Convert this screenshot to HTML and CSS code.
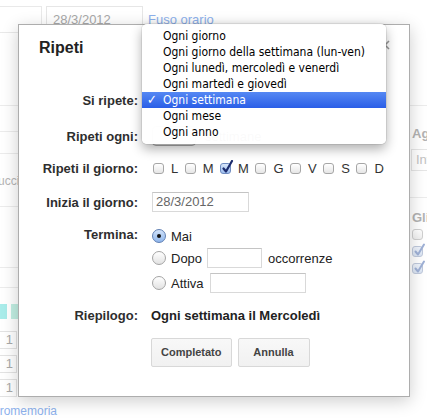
FILE: index.html
```html
<!DOCTYPE html>
<html lang="it">
<head>
<meta charset="utf-8">
<title>Ripeti</title>
<link rel="stylesheet" href="styles.css">
</head>
<body>
<div class="page">
  <div class="toprow">
    <div class="tbox"></div>
    <div class="tinput">28/3/2012</div>
    <span class="tlink">Fuso orario</span>
  </div>
  <div class="cols">
    <div class="leftcol">
      <div class="lrow l1"></div>
      <div class="lrow l2"></div>
      <div class="lrow l3"></div>
      <div class="lrow l4"><span class="ucci">ucci</span></div>
      <div class="lrow l5"></div>
      <div class="lrow l6"></div>
      <div class="bars"><span class="bar b1"></span><span class="bar b2"></span></div>
      <div class="numbox first">1</div>
      <div class="numbox">1</div>
      <div class="numrow"><div class="numbox">1</div><div class="ghostbtn"></div></div>
      <div class="promem">promemoria</div>
    </div>
    <div class="rightcol">
      <div class="rrow r1"></div>
      <div class="rhead ag">Aggiungi</div>
      <div class="rinput">Invita</div>
      <div class="rrow r2"></div>
      <div class="rhead gli">Gli invitati</div>
      <div class="rcb"></div>
      <div class="rcb on"><svg viewBox="0 0 14 14" width="14" height="14"><path d="M3.5 8.5 L6 11.5 L12 1.5" fill="none" stroke="#9fb1d6" stroke-width="2" stroke-linecap="round" stroke-linejoin="round"/></svg></div>
      <div class="rcb on"><svg viewBox="0 0 14 14" width="14" height="14"><path d="M3.5 8.5 L6 11.5 L12 1.5" fill="none" stroke="#9fb1d6" stroke-width="2" stroke-linecap="round" stroke-linejoin="round"/></svg></div>
    </div>
  </div>
</div>

<div class="dialog">
  <div class="title">Ripeti</div>
  <span class="close"><svg viewBox="0 0 10 10" width="10" height="10"><path d="M1 1 L9 9 M9 1 L1 9" stroke="#999" stroke-width="1.6" fill="none"/></svg></span>

  <div class="row r-ripete">
    <div class="label">Si ripete:</div>
    <div class="sel wide"></div>
  </div>
  <div class="row r-ogni">
    <div class="label">Ripeti ogni:</div>
    <div class="sel small"></div>
    <span class="unit">settimane</span>
  </div>
  <div class="row r-giorno">
    <div class="label">Ripeti il giorno:</div>
    <div class="days">
      <span class="cb"></span><span class="day">L</span>
      <span class="cb"></span><span class="day">M</span>
      <span class="cb on"><svg viewBox="0 0 14 14" width="14" height="14"><path d="M3.5 8.5 L6 11.5 L12 1" fill="none" stroke="#1c2c6e" stroke-width="2.2" stroke-linecap="round" stroke-linejoin="round"/></svg></span><span class="day">M</span>
      <span class="cb"></span><span class="day">G</span>
      <span class="cb"></span><span class="day">V</span>
      <span class="cb"></span><span class="day">S</span>
      <span class="cb"></span><span class="day">D</span>
    </div>
  </div>
  <div class="row r-inizia">
    <div class="label">Inizia il giorno:</div>
    <div class="inp date">28/3/2012</div>
  </div>
  <div class="row r-termina">
    <div class="label">Termina:</div>
    <div class="ends">
      <div class="opt o-mai"><span class="radio on"></span><span class="otext">Mai</span></div>
      <div class="opt o-dopo"><span class="radio"></span><span class="otext">Dopo</span><span class="inp occ"></span><span class="otext">occorrenze</span></div>
      <div class="opt o-attiva"><span class="radio"></span><span class="otext">Attiva</span><span class="inp until"></span></div>
    </div>
  </div>
  <div class="row r-riep">
    <div class="label">Riepilogo:</div>
    <div class="summary">Ogni settimana il Mercoledì</div>
  </div>
  <div class="buttons">
    <span class="btn">Completato</span>
    <span class="btn">Annulla</span>
  </div>

  <div class="menu">
    <div class="item">Ogni giorno</div>
    <div class="item">Ogni giorno della settimana (lun-ven)</div>
    <div class="item">Ogni lunedì, mercoledì e venerdì</div>
    <div class="item">Ogni martedì e giovedì</div>
    <div class="item sel-item"><span class="check">✓</span>Ogni settimana</div>
    <div class="item">Ogni mese</div>
    <div class="item">Ogni anno</div>
  </div>
</div>
</body>
</html>
```

FILE: styles.css
```css
* { box-sizing: border-box; }
html, body { margin: 0; padding: 0; }
body {
  width: 427px;
  height: 419px;
  overflow: hidden;
  position: relative;
  background: #fff;
  font-family: "Liberation Sans", Arial, sans-serif;
  font-size: 13px;
  color: #222;
}

/* ---------- faded background page ---------- */
.page { width: 427px; height: 419px; overflow: hidden; }
.toprow { display: flex; align-items: flex-start; height: 33px; padding-top: 6px; }
.tbox { width: 42px; height: 27px; border: 1px solid #e9e9e9; border-left: none; flex: none; }
.tinput {
  margin-left: 4px; width: 97px; height: 27px; flex: none;
  border: 1px solid #e6e6e6; padding-left: 6px;
  line-height: 25px; color: #a8a8a8;
}
.tlink { margin-left: 5px; line-height: 27px; color: #8db1ec; white-space: nowrap; }

.cols { display: flex; height: 386px; }
.leftcol { width: 110px; flex: none; }
.lrow { border-bottom: 1px solid #ececec; }
.l1 { height: 73px; }
.l2 { height: 26px; }
.l3 { height: 22px; }
.l4 { height: 53px; padding-top: 17px; }
.ucci { display: block; line-height: 20px; color: #b5b5b5; font-size: 12px; margin-left: -2px; }
.l5 { height: 61px; }
.l6 { height: 20px; }
.bars { display: flex; gap: 4px; margin-top: 16px; height: 15px; }
.bar { display: block; width: 7px; height: 15px; }
.b1 { background: #a9ecea; }
.b2 { background: #c2efe3; width: 30px; }
.numbox {
  width: 17px; height: 18px; margin-top: 6px;
  border: 1px solid #e3e3e3; border-left: none;
  text-align: right; padding-right: 3px; line-height: 16px;
  color: #a9a9a9; font-size: 13px;
}
.numbox.first { margin-top: 12px; }
.numrow { display: flex; align-items: flex-end; }
.ghostbtn { margin-left: 5px; width: 81px; height: 18px; border: 1px solid #e6e6e6; }
.promem { margin-top: 5px; margin-left: -7px; line-height: 18px; color: #8db1ec; font-size: 12px; }

.rightcol { margin-left: auto; width: 18px; flex: none; overflow: hidden; }
.rrow { border-bottom: 1px solid #ececec; }
.r1 { height: 73px; }
.r2 { height: 27px; }
.rhead { margin-left: 3px; line-height: 20px; font-weight: bold; color: #b3b3b3; white-space: nowrap; }
.ag { margin-top: 18px; }
.gli { margin-top: 10px; }
.rinput {
  margin-left: 2px; margin-top: 5px; width: 40px; height: 22px;
  border: 1px solid #e6e6e6; padding-left: 4px; line-height: 20px;
  color: #c2c2c2; white-space: nowrap; overflow: hidden;
}
.rcb {
  position: relative; margin-left: 3px; margin-top: 6px; width: 11px; height: 11px;
  border: 1px solid #d0d0d0; border-radius: 3px; background: linear-gradient(#fff, #f0f0f0);
}
.gli + .rcb { margin-top: 1px; }
.rcb svg { position: absolute; left: -1px; top: -4px; }
.rcb.on { border-color: #bfc9dc; background: linear-gradient(#eef3fb, #dbe5f4); }

/* ---------- dialog ---------- */
.dialog {
  position: absolute; left: 18px; top: 24px;
  width: 392px; height: 373px;
  background: #fff;
  border: 1px solid #adadad;
  box-shadow: 0 4px 16px rgba(0,0,0,0.2);
  padding-left: 20px;
}
.title { margin-top: 13px; font-size: 16px; line-height: 20px; font-weight: bold; color: #222; }
.close { position: absolute; left: 361px; top: 15px; width: 10px; height: 10px; }
.close svg { display: block; }

.row { display: flex; align-items: center; height: 20px; }
.label {
  width: 99px; margin-right: 14px; flex: none;
  text-align: right; font-weight: bold; color: #2e2e2e; white-space: nowrap;
}
.r-ripete { margin-top: 32px; }
.r-ogni { margin-top: 16px; }
.r-giorno { margin-top: 12px; }
.r-inizia { margin-top: 14px; }
.r-termina { margin-top: 14px; height: auto; align-items: flex-start; }
.r-termina .label { line-height: 18px; }
.r-riep { margin-top: 12px; }

.sel {
  height: 20px; border: 1px solid #a9a9a9; border-radius: 4px;
  background: linear-gradient(#ffffff, #e9e9e9);
}
.sel.wide { width: 130px; }
.sel.small { width: 44px; }
.unit { margin-left: 9px; color: #333; }

.days { display: flex; align-items: center; }
.cb {
  position: relative; flex: none; display: block;
  width: 11px; height: 11px; margin-left: 1px; margin-right: 7px;
  border: 1px solid #a6a6a6; border-radius: 3px;
  background: linear-gradient(#ffffff, #e6e6e6);
}
.cb.on { border-color: #6f8cc0; background: linear-gradient(#d9e7fa, #9cbdee); }
.cb svg { position: absolute; left: -1px; top: -4px; }
.day { margin-right: 5.5px; color: #333; }

.inp {
  display: block; flex: none; height: 20px; background: #fff;
  border: 1px solid #d9d9d9; border-top-color: #c4c4c4;
}
.date { width: 97px; padding-left: 3px; line-height: 18px; color: #666; }

.ends { display: flex; flex-direction: column; }
.opt { display: flex; align-items: center; height: 20px; }
.o-dopo { margin-top: 2px; }
.o-attiva { margin-top: 5px; }
.radio {
  position: relative; display: block; flex: none;
  width: 14px; height: 14px; border-radius: 50%;
  border: 1px solid #a4a4a4;
  background: linear-gradient(#ffffff, #e2e2e2);
  margin-right: 5px;
}
.radio.on { border-color: #5f7fb3; background: linear-gradient(#d2e3fa, #8fb6ec); }
.radio.on::after {
  content: ""; position: absolute; left: 4px; top: 4px;
  width: 4px; height: 4px; border-radius: 50%; background: #111;
}
.otext { color: #222; }
.occ { width: 55px; margin-left: 5px; margin-right: 6px; }
.until { width: 96px; margin-left: 6px; }

.summary { font-weight: bold; color: #222; margin-left: -1px; white-space: nowrap; }

.buttons { display: flex; gap: 6px; margin-top: 13px; margin-left: 112px; }
.btn {
  display: block; height: 29px; min-width: 72px; padding: 0 9px;
  border: 1px solid #d8d8d8; border-radius: 2px;
  background: linear-gradient(#f8f8f8, #f1f1f1);
  font-size: 11px; font-weight: bold; color: #444;
  line-height: 27px; text-align: center;
}

/* ---------- popup menu ---------- */
.menu {
  position: absolute; left: 123px; top: -1px;
  width: 244px; height: 120px; padding: 4px 0;
  background: rgba(255,255,255,0.975);
  border-radius: 5px;
  box-shadow: 0 5px 12px rgba(0,0,0,0.32), 0 0 0 1px rgba(0,0,0,0.07);
  font-family: "DejaVu Sans Condensed", "DejaVu Sans", sans-serif;
  font-stretch: condensed;
  font-size: 12px;
  color: #000;
}
.item { position: relative; height: 16px; line-height: 16px; padding-left: 21px; white-space: nowrap; }
.sel-item { background: linear-gradient(#5588f3, #2a5ee7); color: #fff; }
.check { position: absolute; left: 5px; top: 0; font-family: "DejaVu Sans", sans-serif; font-size: 13px; font-weight: bold; }
```
